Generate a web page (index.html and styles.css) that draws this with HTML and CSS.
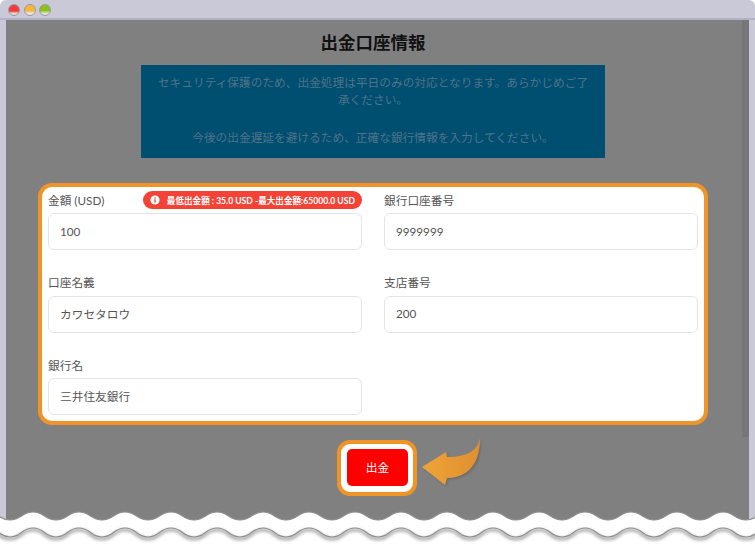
FILE: index.html
```html
<!DOCTYPE html>
<html lang="ja">
<head>
<meta charset="utf-8">
<title>出金口座情報</title>
<link rel="stylesheet" href="styles.css">
</head>
<body>
<div class="window">
  <div class="titlebar">
    <span class="dot dot-red"></span>
    <span class="dot dot-yellow"></span>
    <span class="dot dot-green"></span>
  </div>
  <div class="frame">
    <main class="content">
      <h1 class="title">出金口座情報</h1>
      <div class="notice">
        <p>セキュリティ保護のため、出金処理は平日のみの対応となります。あらかじめご了承ください。</p>
        <p>今後の出金遅延を避けるため、正確な銀行情報を入力してください。</p>
      </div>
      <form class="card">
        <div class="field">
          <div class="label-row">
            <label class="label">金額 (USD)</label>
            <span class="badge">
              <svg class="badge-icon" viewBox="0 0 10 10"><circle cx="5" cy="5" r="4.6" fill="#fff"/><rect x="4.3" y="4.3" width="1.4" height="3.3" fill="#f44336"/><rect x="4.3" y="2.3" width="1.4" height="1.3" fill="#f44336"/></svg>
              最低出金額 : 35.0 USD -最大出金額:65000.0 USD
            </span>
          </div>
          <div class="input">100</div>
        </div>
        <div class="field">
          <div class="label-row"><label class="label">銀行口座番号</label></div>
          <div class="input">9999999</div>
        </div>
        <div class="field">
          <div class="label-row"><label class="label">口座名義</label></div>
          <div class="input">カワセタロウ</div>
        </div>
        <div class="field">
          <div class="label-row"><label class="label">支店番号</label></div>
          <div class="input">200</div>
        </div>
        <div class="field">
          <div class="label-row"><label class="label">銀行名</label></div>
          <div class="input">三井住友銀行</div>
        </div>
      </form>
      <div class="submit-wrap">
        <div class="submit-ring"><button class="submit" type="button">出金</button></div>
        <svg class="arrow" viewBox="0 0 66 54" width="66" height="54">
          <defs>
            <linearGradient id="arrowFill" x1="0" x2="1" y1="0" y2="0">
              <stop offset="0" stop-color="#eea436"/>
              <stop offset="1" stop-color="#e08f30"/>
            </linearGradient>
            <filter id="arrowBlur" x="-10%" y="-10%" width="120%" height="120%"><feGaussianBlur stdDeviation="1"/></filter>
          </defs>
          <path d="M60 1 C58 12 50 20 27 20 L26 15 L2 30 L25 48 L27 41 C45 41 60 30 60 1 Z" fill="#555" opacity=".45" filter="url(#arrowBlur)" transform="translate(1.5 1.5)"/>
          <path d="M60 1 C58 12 50 20 27 20 L26 15 L2 30 L25 48 L27 41 C45 41 60 30 60 1 Z" fill="url(#arrowFill)"/>
        </svg>
      </div>
    </main>
    <div class="scrollbar"></div>
  </div>
  <svg class="wave" viewBox="0 0 755 35" width="755" height="35">
    <defs>
      <filter id="waveShadow" x="-5%" y="-30%" width="110%" height="200%"><feGaussianBlur stdDeviation="1.8"/></filter>
    </defs>
    <path d="M-24.5 6 q11.5 -8 23 0 t23 0 t23 0 t23 0 t23 0 t23 0 t23 0 t23 0 t23 0 t23 0 t23 0 t23 0 t23 0 t23 0 t23 0 t23 0 t23 0 t23 0 t23 0 t23 0 t23 0 t23 0 t23 0 t23 0 t23 0 t23 0 t23 0 t23 0 t23 0 t23 0 t23 0 t23 0 t23 0 t23 0 V40 H-24.5 Z" fill="#fff" stroke="#8e8e8e" stroke-width="1.2"/>
    <path d="M-24.5 24.5 q11.5 -9 23 0 t23 0 t23 0 t23 0 t23 0 t23 0 t23 0 t23 0 t23 0 t23 0 t23 0 t23 0 t23 0 t23 0 t23 0 t23 0 t23 0 t23 0 t23 0 t23 0 t23 0 t23 0 t23 0 t23 0 t23 0 t23 0 t23 0 t23 0 t23 0 t23 0 t23 0 t23 0 t23 0 t23 0" fill="none" stroke="#aaa" stroke-width="3" filter="url(#waveShadow)"/>
    <path d="M-24.5 22.5 q11.5 -9 23 0 t23 0 t23 0 t23 0 t23 0 t23 0 t23 0 t23 0 t23 0 t23 0 t23 0 t23 0 t23 0 t23 0 t23 0 t23 0 t23 0 t23 0 t23 0 t23 0 t23 0 t23 0 t23 0 t23 0 t23 0 t23 0 t23 0 t23 0 t23 0 t23 0 t23 0 t23 0 t23 0 t23 0" fill="none" stroke="#8e8e8e" stroke-width="1.2"/>
  </svg>
</div>
</body>
</html>
```
FILE: styles.css
```css
* { box-sizing: border-box; }
html, body { margin: 0; padding: 0; background: #fff; }
body { font-family: Lato, "Noto Sans CJK JP", sans-serif; color: #212529; }
.window { position: relative; width: 755px; height: 545px; overflow: hidden; background: #c9c9d7; border-radius: 6px 6px 0 0; }
.titlebar { height: 20px; display: flex; align-items: center; gap: 3.5px; padding: 2px 0 0 8px; border-bottom: 2px solid #b1b1c9; }
.dot { width: 12px; height: 12px; border-radius: 50%; border: 1px solid #9a9a9a; }
.dot-red { background: linear-gradient(#f23a3a 0 60%, #e8d8d8 85%); }
.dot-yellow { background: linear-gradient(#f8b63e 0 55%, #ece6da 85%); }
.dot-green { background: linear-gradient(#8cc21f 0 55%, #e0e6d6 85%); }
.frame { display: flex; height: 525px; margin: 0 6px; background: #808080; }
.content { flex: 1; display: flex; flex-direction: column; align-items: center; padding: 10px 2px 0 0; }
.scrollbar { width: 7px; height: 417px; background: #777; }
.title { margin: 0; font-size: 17.5px; line-height: 26px; font-weight: 700; color: #111; }
.notice { width: 464px; height: 93px; margin-top: 9px; padding: 9px 15px; background: #004e70; color: #4f7389; font-size: 11.7px; line-height: 17px; text-align: center; }
.notice p { margin: 0 0 21px; }
.card { width: 670px; height: 242px; margin-top: 25px; padding: 4px 6px 0; background: #fff; border: 4px solid #f09428; border-radius: 14px; display: grid; grid-template-columns: 314px 314px; column-gap: 22px; grid-auto-rows: 82.5px; align-content: start; }
.label-row { display: flex; justify-content: space-between; align-items: center; height: 18px; margin-bottom: 4px; }
.label { font-size: 11.7px; line-height: 16px; margin-bottom: 1px; color: #555; }
.badge { display: flex; align-items: center; gap: 5px; height: 18px; padding: 0 7px; background: #f44336; border-radius: 9px; color: #fff; font-size: 8.6px; font-weight: 700; white-space: nowrap; }
.badge-icon { width: 10px; height: 10px; margin-right: 2px; flex: none; }
.input { height: 37px; display: flex; align-items: center; padding: 0 11px 2px; background: #fff; border: 1px solid #e2e5e8; border-radius: 6px; font-size: 11.7px; color: #555; }
.submit-wrap { position: relative; width: 80px; margin: 15px 0 0 8px; }
.submit-ring { width: 80px; height: 56px; padding: 5px 6px; background: #fff; border: 4px solid #f09428; border-radius: 13px; }
.submit { display: block; width: 61px; height: 37px; margin: 0; padding: 0 0 2px; border: 0; border-radius: 5px; background: #f00; color: #fff; font: 11.7px Lato, "Noto Sans CJK JP", sans-serif; }
.arrow { position: absolute; left: 83px; top: -3px; }
.wave { position: absolute; left: 0; bottom: 0; display: block; }
```
